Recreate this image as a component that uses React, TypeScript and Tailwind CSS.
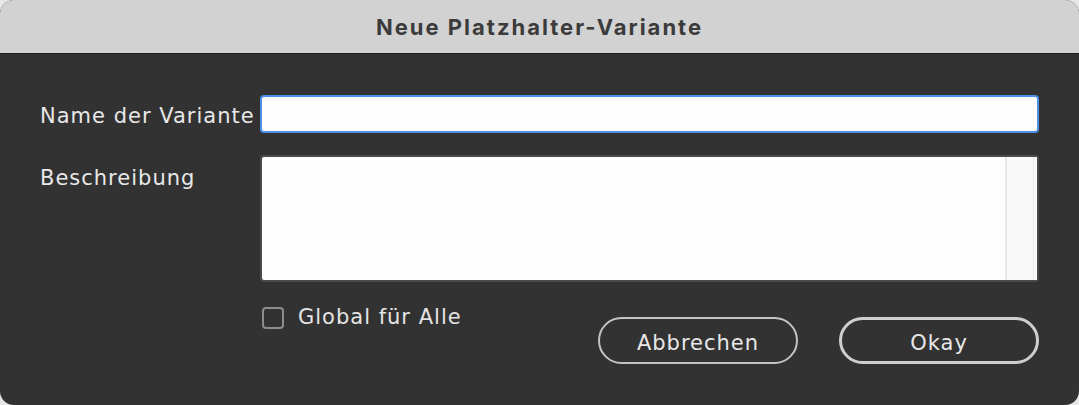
export default function App() {
  return (
    <div className="h-[405px] w-[1079px] bg-[#e6e6e6]">
      <div className="flex h-full flex-col overflow-hidden rounded-[14px] bg-[#323232]">
        <div className="flex h-[54px] items-center justify-center border-b border-[#1e1e1e] bg-[#d2d2d2] pt-[2px] font-['Inter',sans-serif] text-[22px] font-bold tracking-[2px] text-[#3b3b3b]">
          Neue Platzhalter-Variante
        </div>
        <div className="flex flex-col pl-[40px] pr-[40px] pt-[41px] font-['DejaVu_Sans',sans-serif] tracking-[1px] text-[#e8e8e8]">
          <div className="flex items-center">
            <label className="w-[220px] whitespace-nowrap pt-[6px] text-[21px]">Name der Variante</label>
            <input className="h-[38px] flex-1 rounded-[4px] border-2 border-[#4b8fe8] bg-[#fdfdfd] px-2 text-[16px] text-black outline-none" />
          </div>
          <div className="mt-[22px] flex items-start">
            <label className="w-[220px] pt-[8px] text-[21px]">Beschreibung</label>
            <div className="flex h-[127px] flex-1 rounded-[4px] border-2 border-[#4a4a4a] bg-[#fdfdfd]">
              <textarea className="flex-1 resize-none bg-transparent px-2 text-[16px] text-black outline-none" />
              <div className="w-[32px] border-l-2 border-[#e8e8e8] bg-[#f9f9f9]">
                <div className="ml-auto h-full w-[4px] border-l border-[#ececec]" />
              </div>
            </div>
          </div>
          <div className="ml-[222px] mt-[20px] flex items-start">
            <label className="flex items-center gap-[14px] text-[21px] text-[#e4e4e4]">
              <span className="h-[22px] w-[22px] rounded-[4px] border-2 border-[#8c8c8c]" />
              Global für Alle
            </label>
            <div className="ml-auto mt-[15px] flex gap-[41px]">
              <button className="flex h-[47px] w-[200px] items-center justify-center rounded-full border-2 border-[#c4c4c4] pt-[6px] text-[21px] text-[#e8e8e8]">
                Abbrechen
              </button>
              <button className="flex h-[47px] w-[200px] items-center justify-center rounded-full border-[3px] border-[#cfcfcf] pt-[6px] text-[21px] text-[#e8e8e8]">
                Okay
              </button>
            </div>
          </div>
        </div>
      </div>
    </div>
  );
}
